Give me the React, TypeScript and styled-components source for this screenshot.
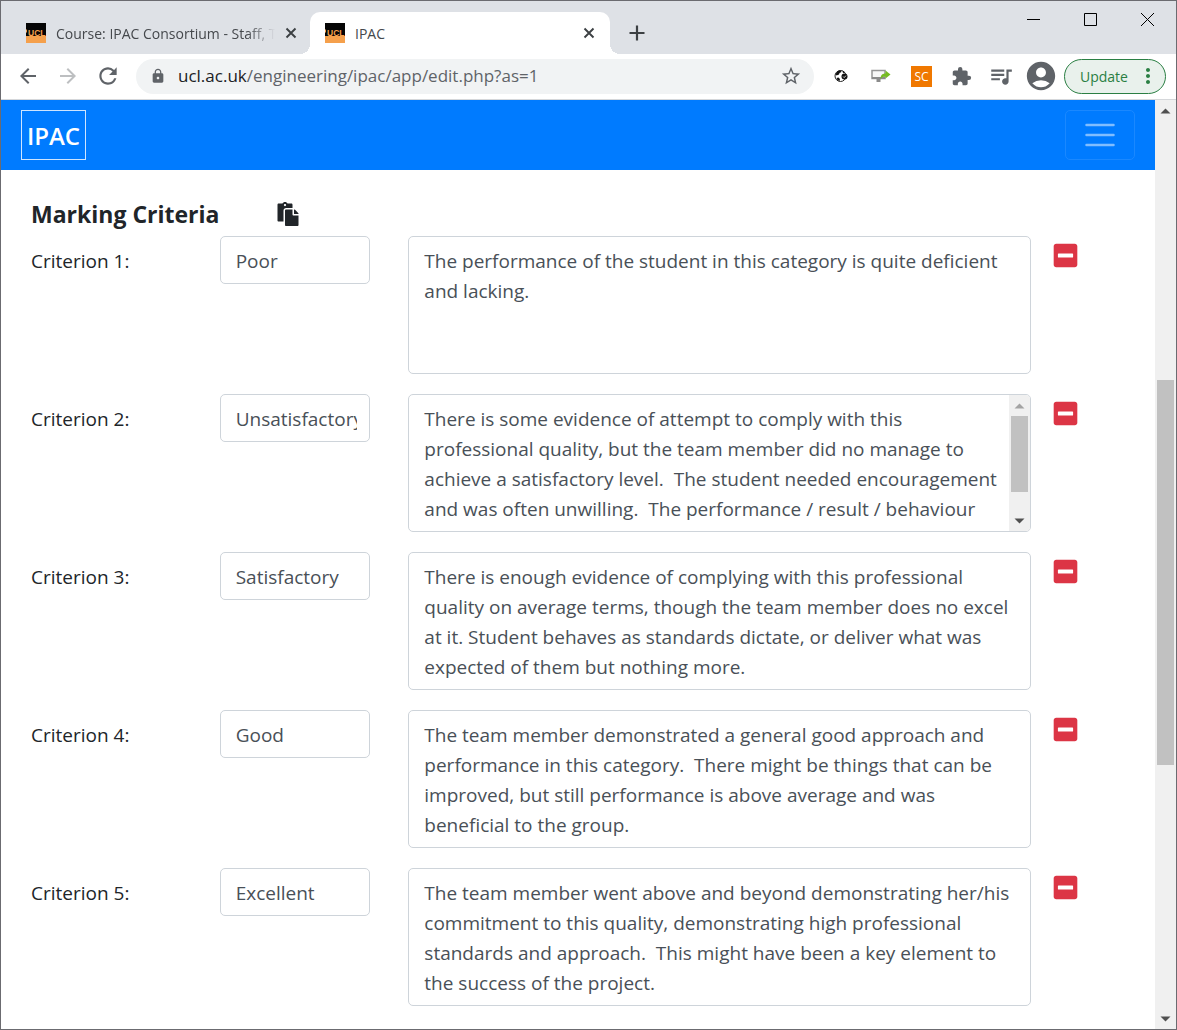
import React, { useState } from "react";
import styled, { createGlobalStyle } from "styled-components";
import {
  MdAccountCircle,
  MdArrowBack,
  MdArrowForward,
  MdExtension,
  MdLock,
  MdMoreVert,
  MdQueueMusic,
  MdRefresh,
  MdStarBorder,
} from "react-icons/md";
import { FaMinusSquare, FaPaste } from "react-icons/fa";

const GlobalStyle = createGlobalStyle`
  *, *::before, *::after { box-sizing: border-box; }
  body {
    margin: 0;
    background: #fff;
    color: #212529;
    font-family: "Open Sans", "Noto Sans", sans-serif;
  }
  button, input, textarea { font: inherit; color: inherit; margin: 0; }
  button { padding: 0; border: 0; background: none; cursor: pointer; }
  svg { display: block; flex: none; }
`;

const BrowserWindow = styled.div`
  display: flex;
  flex-direction: column;
  min-height: 100vh;
  border: 1px solid #6b6b70;
`;

/* ---------- tab strip ---------- */

const TabStrip = styled.header`
  display: flex;
  align-items: flex-end;
  height: 53px;
  background: #dee1e6;
`;

const Tab = styled.div<{ $active?: boolean }>`
  position: relative;
  display: flex;
  align-items: center;
  gap: ${(p) => (p.$active ? 10 : 7)}px;
  flex: 0 1 ${(p) => (p.$active ? 300 : 309)}px;
  min-width: 0;
  height: 42px;
  padding: 0 ${(p) => (p.$active ? 12 : 10)}px 0 ${(p) => (p.$active ? 15 : 25)}px;
  border-radius: 10px 10px 0 0;
  background: ${(p) => (p.$active ? "#fff" : "transparent")};
  color: #45484c;
  font-size: 14px;

  &::before,
  &::after {
    content: "";
    display: ${(p) => (p.$active ? "block" : "none")};
    position: absolute;
    bottom: 0;
    width: 10px;
    height: 10px;
  }
  &::before {
    right: 100%;
    background: radial-gradient(circle at 0 0, transparent 10px, #fff 10px);
  }
  &::after {
    left: 100%;
    background: radial-gradient(circle at 100% 0, transparent 10px, #fff 10px);
  }
`;

const TabTitle = styled.span<{ $fade?: boolean }>`
  flex: 1;
  min-width: 0;
  padding-left: ${(p) => (p.$fade ? 3 : 0)}px;
  overflow: hidden;
  white-space: nowrap;
  mask-image: ${(p) =>
    p.$fade ? "linear-gradient(to right, #000 calc(100% - 28px), transparent)" : "none"};
`;

const TabButton = styled.button`
  display: grid;
  place-content: center;
  width: 18px;
  height: 18px;
`;

const NewTab = styled.button`
  display: grid;
  place-content: center;
  width: 54px;
  height: 42px;
`;

const WindowButtons = styled.div`
  display: flex;
  align-self: flex-start;
  margin-left: auto;
`;

const WindowButton = styled.button`
  display: grid;
  place-content: center;
  width: 57px;
  height: 37px;
`;

/* ---------- toolbar ---------- */

const Toolbar = styled.div`
  display: flex;
  align-items: center;
  height: 46px;
  padding: 0 10px 1px 15px;
  border-bottom: 1px solid #d5d7da;
  color: #5f6368;
`;

const NavButtons = styled.div`
  display: flex;
  gap: 16px;
  margin-right: 16px;
`;

const IconButton = styled.button<{ $faded?: boolean; $dark?: boolean }>`
  display: grid;
  place-content: center;
  width: 24px;
  height: 36px;
  color: ${(p) => (p.$faded ? "#bdbfc1" : p.$dark ? "#212529" : "#5f6368")};
`;

const AddressBar = styled.div`
  display: flex;
  align-items: center;
  flex: 1;
  min-width: 0;
  height: 35px;
  padding: 0 11px 0 14px;
  border-radius: 18px;
  background: #f1f3f4;
`;

const Url = styled.div`
  flex: 1;
  min-width: 0;
  padding-left: 12px;
  overflow: hidden;
  white-space: nowrap;
  font-size: 17px;
  line-height: 24px;
`;

const Host = styled.span`
  color: #202124;
`;

const Extensions = styled.div`
  display: flex;
  align-items: center;
  gap: 16px;
  padding: 0 11px 0 15px;
`;

const UpdateButton = styled.button`
  display: flex;
  align-items: center;
  justify-content: space-between;
  width: 102px;
  height: 35px;
  padding: 0 5px 0 15px;
  border: 1px solid #2a7f43;
  border-radius: 18px;
  background: #e9f1ec;
  color: #2a7f43;
  font-size: 14px;
`;

/* ---------- page ---------- */

const Viewport = styled.div`
  display: flex;
  flex: 1;
`;

const Page = styled.main`
  flex: 1;
  min-width: 0;
`;

const NavBar = styled.nav`
  display: flex;
  align-items: center;
  justify-content: space-between;
  height: 70px;
  padding: 0 20px;
  background: #007bff;
`;

const Brand = styled.a`
  display: grid;
  place-content: center;
  width: 65px;
  height: 50px;
  border: 1px solid #cfe5ff;
  color: #fff;
  font-size: 24px;
  font-weight: 600;
  text-decoration: none;
`;

const MenuButton = styled.button`
  display: grid;
  place-content: center;
  width: 70px;
  height: 50px;
  border: 1px solid #1a88ff;
  border-radius: 5px;
`;

const Form = styled.form`
  padding: 24px 11px 20px;
`;

const Columns = styled.div`
  display: grid;
  grid-template-columns: minmax(0, 2fr) minmax(0, 2fr) minmax(0, 7fr) minmax(0, 1fr);
  align-items: start;
`;

const HeadingRow = styled.div`
  display: flex;
  align-items: center;
  height: 42px;
  padding-bottom: 2px;
`;

const Heading = styled.h1`
  width: 264px;
  margin: 0;
  padding-left: 19px;
  font-size: 23px;
  font-weight: 700;
  line-height: 30px;
`;

const Rows = styled.div`
  display: flex;
  flex-direction: column;
  gap: 20px;
`;

const Label = styled.label`
  padding: 10px 19px 0;
  font-size: 19px;
  line-height: 30px;
`;

const Cell = styled.div`
  padding: 0 19px;
`;

const NameInput = styled.input`
  display: block;
  width: 100%;
  height: 48px;
  padding: 9px 12px 7px 15px;
  border: 1px solid #ced4da;
  border-radius: 5px;
  background: #fff;
  color: #495057;
  font-size: 19px;
  line-height: 30px;
`;

const DescriptionFrame = styled.div`
  display: flex;
  height: 138px;
  overflow: hidden;
  border: 1px solid #ced4da;
  border-radius: 5px;
`;

const Description = styled.textarea<{ $scrolls?: boolean }>`
  display: block;
  flex: 1;
  min-width: 0;
  padding: 9px ${(p) => (p.$scrolls ? 8 : 15)}px 7px 15px;
  border: 0;
  outline: 0;
  resize: none;
  overflow: hidden;
  background: transparent;
  color: #495057;
  font-size: 19px;
  line-height: 30px;
`;

const RemoveButton = styled.button`
  padding: 6px 2px;
  color: #dc3545;
`;

/* ---------- scroll bars ---------- */

const ScrollBar = styled.div`
  display: flex;
  flex-direction: column;
  flex: none;
  width: 21px;
  background: #f0f0f0;
`;

const ScrollArrow = styled.button`
  display: grid;
  place-content: center;
  height: 21px;
`;

const Track = styled.div<{ $before: number; $thumb: number; $after: number }>`
  display: grid;
  flex: 1;
  padding: 0 2px;
  grid-template-rows: ${(p) => `${p.$before}fr ${p.$thumb}fr ${p.$after}fr`};
`;

const Thumb = styled.div`
  grid-row: 2;
  background: #c1c1c1;
`;

function Scroller(props: { before: number; thumb: number; after: number; atTop?: boolean }) {
  return (
    <ScrollBar>
      <ScrollArrow type="button" aria-label="Scroll up">
        <svg width="11" height="6" viewBox="0 0 10 6">
          <path d="M0 5.500L5 .5l5 5z" fill={props.atTop ? "#a3a3a3" : "#505050"} />
        </svg>
      </ScrollArrow>
      <Track $before={props.before} $thumb={props.thumb} $after={props.after}>
        <Thumb />
      </Track>
      <ScrollArrow type="button" aria-label="Scroll down">
        <svg width="11" height="6" viewBox="0 0 10 6">
          <path d="M0 .5L5 5.500l5-5z" fill="#505050" />
        </svg>
      </ScrollArrow>
    </ScrollBar>
  );
}

/* ---------- drawings ---------- */

const UclIcon = () => (
  <svg width="20" height="20" viewBox="0 0 20 20" aria-hidden="true">
    <path d="M0 0h20v20H0z" fill="#f5a04c" />
    <path d="M0 0h20v13H0z" fill="#050505" />
    <text x="2" y="12.500" fontSize="8.500" fontWeight="700" fill="#f5a04c" fontFamily="Liberation Sans, sans-serif">
      UCL
    </text>
    <path d="M0 6.500h1v3H0z" fill="#f5a04c" />
  </svg>
);

const CrossIcon = () => (
  <svg width="12" height="12" viewBox="0 0 12 12" aria-hidden="true">
    <path d="M1.500 1.500l9 9m0-9l-9 9" stroke="#3c4043" strokeWidth="1.900" />
  </svg>
);

const GlobeIcon = () => (
  <svg width="14" height="14" viewBox="0 0 14 14" aria-hidden="true">
    <circle cx="6.500" cy="7" r="5.500" fill="#fff" stroke="#222" strokeWidth="1" />
    <path d="M1.500 5L4 2l2.500-.8L7.500 3 5.500 4 5 5.500 2.500 6.500zM2.500 9L4.500 8.500l1.500 1.500-.5 2-2-.8zM8.500 1.500l2.500 1.800-2 1z" fill="#111" />
    <circle cx="10.500" cy="7.500" r="3" fill="#111" />
    <path d="M9.100 7.500l1.100 1.100 1.800-2" fill="none" stroke="#fff" strokeWidth=".8" />
  </svg>
);

const ShareScreenIcon = () => (
  <svg width="20" height="14" viewBox="0 0 20 14" aria-hidden="true">
    <path d="M1 1.500h13v8H1z" fill="#f7f7f7" stroke="#969696" strokeWidth="1.500" />
    <path d="M1 8h13v2H1zM5.500 10h4v3h-4z" fill="#8b8b8b" />
    <path d="M9.500 10.500c0-4 1.500-6 5-6V1.500L19.500 5.500l-5 4V7.500c-2.500 0-4 .7-5 3z" fill="#76bc21" />
  </svg>
);

const ScIcon = () => (
  <svg width="21" height="21" viewBox="0 0 21 21" aria-hidden="true">
    <path d="M0 0h21v21H0z" fill="#f07800" />
    <text x="10.500" y="15" textAnchor="middle" fontSize="12" fill="#fff" fontFamily="Open Sans, sans-serif">
      SC
    </text>
  </svg>
);

/* ---------- data ---------- */

const initialCriteria = [
  {
    name: "Poor",
    text: "The performance of the student in this category is quite deficient and lacking.",
  },
  {
    name: "Unsatisfactory",
    text: "There is some evidence of attempt to comply with this professional quality, but the team member did no manage to achieve a satisfactory level.  The student needed encouragement and was often unwilling.  The performance / result / behaviour",
    scrolls: true,
  },
  {
    name: "Satisfactory",
    text: "There is enough evidence of complying with this professional quality on average terms, though the team member does no excel at it. Student behaves as standards dictate, or deliver what was expected of them but nothing more.",
  },
  {
    name: "Good",
    text: "The team member demonstrated a general good approach and performance in this category.  There might be things that can be improved, but still performance is above average and was beneficial to the group.",
  },
  {
    name: "Excellent",
    text: "The team member went above and beyond demonstrating her/his commitment to this quality, demonstrating high professional standards and approach.  This might have been a key element to the success of the project.",
  },
];

export default function App() {
  const [criteria, setCriteria] = useState(initialCriteria);
  const remove = (index: number) => setCriteria(criteria.filter((_, i) => i !== index));

  return (
    <>
      <GlobalStyle />
      <BrowserWindow>
        <TabStrip>
          <Tab>
            <UclIcon />
            <TabTitle $fade>Course: IPAC Consortium - Staff, T</TabTitle>
            <TabButton type="button" aria-label="Close tab"><CrossIcon /></TabButton>
          </Tab>
          <Tab $active>
            <UclIcon />
            <TabTitle>IPAC</TabTitle>
            <TabButton type="button" aria-label="Close tab"><CrossIcon /></TabButton>
          </Tab>
          <NewTab type="button" aria-label="New tab">
            <svg width="16" height="16" viewBox="0 0 16 16">
              <path d="M8 .5v15M.5 8h15" stroke="#3c4043" strokeWidth="2.200" />
            </svg>
          </NewTab>
          <WindowButtons>
            <WindowButton type="button" aria-label="Minimise">
              <svg width="13" height="13" viewBox="0 0 13 13"><path d="M0 6.500h13" stroke="#000" /></svg>
            </WindowButton>
            <WindowButton type="button" aria-label="Maximise">
              <svg width="13" height="13" viewBox="0 0 13 13"><path d="M.5.5h12v12H.5z" fill="none" stroke="#000" /></svg>
            </WindowButton>
            <WindowButton type="button" aria-label="Close">
              <svg width="13" height="13" viewBox="0 0 13 13"><path d="M0 0l13 13M13 0L0 13" stroke="#000" /></svg>
            </WindowButton>
          </WindowButtons>
        </TabStrip>

        <Toolbar>
          <NavButtons>
            <IconButton type="button" aria-label="Back"><MdArrowBack size={24} /></IconButton>
            <IconButton type="button" aria-label="Forward" $faded><MdArrowForward size={24} /></IconButton>
            <IconButton type="button" aria-label="Reload"><MdRefresh size={26} /></IconButton>
          </NavButtons>
          <AddressBar>
            <MdLock size={16} />
            <Url><Host>ucl.ac.uk</Host>/engineering/ipac/app/edit.php?as=1</Url>
            <IconButton type="button" aria-label="Bookmark"><MdStarBorder size={22} /></IconButton>
          </AddressBar>
          <Extensions>
            <IconButton type="button" aria-label="Site checker"><GlobeIcon /></IconButton>
            <IconButton type="button" aria-label="Share screen"><ShareScreenIcon /></IconButton>
            <IconButton type="button" aria-label="SC"><ScIcon /></IconButton>
            <IconButton type="button" aria-label="Extensions"><MdExtension size={21} /></IconButton>
            <IconButton type="button" aria-label="Media"><MdQueueMusic size={26} /></IconButton>
            <IconButton type="button" aria-label="Profile"><MdAccountCircle size={34} /></IconButton>
          </Extensions>
          <UpdateButton type="button">
            Update
            <MdMoreVert size={24} />
          </UpdateButton>
        </Toolbar>

        <Viewport>
          <Page>
            <NavBar>
              <Brand href="#">IPAC</Brand>
              <MenuButton type="button" aria-label="Menu">
                <svg width="30" height="24" viewBox="0 0 30 24">
                  <path d="M1.500 2h27M1.500 12h27M1.500 22h27" stroke="#80bdff" strokeWidth="2.500" strokeLinecap="round" />
                </svg>
              </MenuButton>
            </NavBar>
            <Form>
              <HeadingRow>
                <Heading>Marking Criteria</Heading>
                <IconButton type="button" aria-label="Paste criteria" $dark>
                  <FaPaste size={24} />
                </IconButton>
              </HeadingRow>
              <Rows>
                {criteria.map((c, i) => (
                  <Columns key={c.name}>
                    <Label htmlFor={`name-${i}`}>Criterion {i + 1}:</Label>
                    <Cell>
                      <NameInput id={`name-${i}`} defaultValue={c.name} />
                    </Cell>
                    <Cell>
                      <DescriptionFrame>
                        <Description
                          aria-label={`Criterion ${i + 1} description`}
                          defaultValue={c.text}
                          spellCheck={false}
                          $scrolls={c.scrolls}
                        />
                        {c.scrolls && <Scroller before={0} thumb={76} after={18} atTop />}
                      </DescriptionFrame>
                    </Cell>
                    <RemoveButton type="button" aria-label={`Remove criterion ${i + 1}`} onClick={() => remove(i)}>
                      <FaMinusSquare size={27} />
                    </RemoveButton>
                  </Columns>
                ))}
              </Rows>
            </Form>
          </Page>
          <Scroller before={259} thumb={385} after={243} />
        </Viewport>
      </BrowserWindow>
    </>
  );
}
